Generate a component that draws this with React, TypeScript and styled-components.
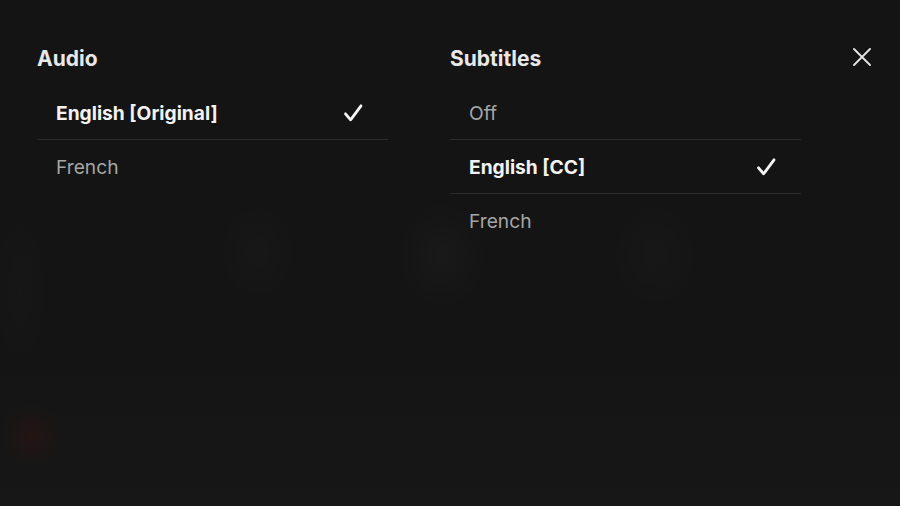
import React from "react";
import styled, { createGlobalStyle } from "styled-components";

const GlobalStyle = createGlobalStyle`
  html, body {
    margin: 0;
    padding: 0;
    background: #141414;
  }
  * { box-sizing: border-box; }
`;

const Page = styled.div`
  position: relative;
  width: 100%;
  min-height: 506px;
  padding: 46px 29px 0 37px;
  display: flex;
  justify-content: space-between;
  align-items: flex-start;
  font-family: Inter, "Noto Sans", sans-serif;
  background:
    radial-gradient(circle at 32px 435px, rgba(80, 18, 14, 0.22) 0, rgba(80, 18, 14, 0) 34px),
    radial-gradient(ellipse 40px 50px at 258px 252px, rgba(255, 255, 255, 0.015), rgba(255, 255, 255, 0) 100%),
    radial-gradient(ellipse 45px 55px at 442px 255px, rgba(255, 255, 255, 0.025), rgba(255, 255, 255, 0) 100%),
    radial-gradient(ellipse 45px 55px at 655px 255px, rgba(255, 255, 255, 0.015), rgba(255, 255, 255, 0) 100%),
    radial-gradient(ellipse 30px 80px at 20px 290px, rgba(255, 255, 255, 0.012), rgba(255, 255, 255, 0) 100%),
    linear-gradient(180deg, #141414 0%, #141414 70%, #171717 100%);
`;

const Columns = styled.div`
  display: flex;
  gap: 62px;
`;

const Column = styled.section`
  width: 351px;
  display: flex;
  flex-direction: column;
`;

const Heading = styled.h2`
  margin: 0 0 14px 0;
  font-size: 21px;
  line-height: 26px;
  font-weight: 700;
  color: #e8e8e8;
  letter-spacing: 0;
`;

const List = styled.ul`
  list-style: none;
  margin: 0;
  padding: 0;
`;

const Row = styled.li<{ $selected?: boolean }>`
  height: 54px;
  display: flex;
  align-items: center;
  justify-content: space-between;
  padding: 0 25px 0 19px;
  border-bottom: 1px solid #2b2b2b;
  font-size: 19.2px;
  font-weight: ${(p) => (p.$selected ? 700 : 400)};
  color: ${(p) => (p.$selected ? "#f2f2f2" : "#a6a6a6")};
  &:last-child {
    border-bottom: none;
  }
`;

const CloseButton = styled.button`
  margin-top: 2px;
  padding: 0;
  border: none;
  background: none;
  width: 18px;
  height: 18px;
  display: flex;
  cursor: pointer;
`;

const Check = () => (
  <svg width="20" height="20" viewBox="0 0 20 20" fill="none">
    <path d="M2.5 10.8 L7.6 16.8 L18 2.8" stroke="#f4f4f4" strokeWidth="2.8" strokeLinecap="round" strokeLinejoin="round" />
  </svg>
);

const CloseIcon = () => (
  <svg width="18" height="18" viewBox="0 0 18 18" fill="none">
    <path d="M1 1 L17 17 M17 1 L1 17" stroke="#e6e6e6" strokeWidth="1.8" strokeLinecap="round" />
  </svg>
);

type Option = { label: string; selected?: boolean };

const audio: Option[] = [
  { label: "English [Original]", selected: true },
  { label: "French" },
];

const subtitles: Option[] = [
  { label: "Off" },
  { label: "English [CC]", selected: true },
  { label: "French" },
];

const OptionList = ({ options }: { options: Option[] }) => (
  <List>
    {options.map((o) => (
      <Row key={o.label} $selected={o.selected}>
        <span>{o.label}</span>
        {o.selected && <Check />}
      </Row>
    ))}
  </List>
);

export default function App() {
  return (
    <>
      <GlobalStyle />
      <Page>
        <Columns>
          <Column>
            <Heading>Audio</Heading>
            <OptionList options={audio} />
          </Column>
          <Column>
            <Heading>Subtitles</Heading>
            <OptionList options={subtitles} />
          </Column>
        </Columns>
        <CloseButton aria-label="Close">
          <CloseIcon />
        </CloseButton>
      </Page>
    </>
  );
}
